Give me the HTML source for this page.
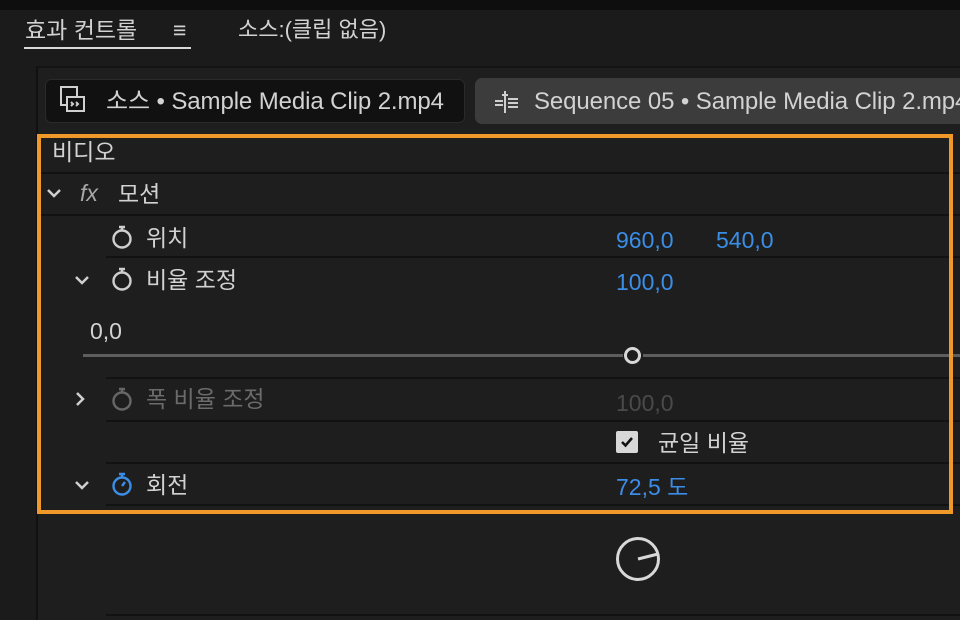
<!DOCTYPE html>
<html><head><meta charset="utf-8"><style>
*{margin:0;padding:0;box-sizing:border-box}
body{width:960px;height:620px;background:#1b1b1b;overflow:hidden;position:relative;font-family:"Liberation Sans","Noto Sans CJK KR",sans-serif;color:#d2d2d2}
.a{position:absolute;white-space:nowrap;line-height:1}
.ln{position:absolute;height:2px;background:#121212}
.k{font-size:23px}
.v{font-size:23px;color:#3b8de6}
</style></head><body>
<div class="a" style="left:0;top:0;width:960px;height:10px;background:#0e0e0e"></div>
<div class="a" style="left:36px;top:66px;width:924px;height:554px;background:#1e1e1e;border-left:2px solid #111;border-top:2px solid #141414"></div>
<div class="a" style="left:25px;top:19px;font-size:23px">효과 컨트롤</div>
<div class="a" style="left:173px;top:19px;font-size:23px">≡</div>
<div class="a" style="left:24px;top:47px;width:167px;height:2px;background:#d8d8d8"></div>
<div class="a" style="left:238px;top:19px;font-size:22px">소스:(클립 없음)</div>

<div class="a" style="left:45px;top:79px;width:420px;height:44px;background:#111;border:1px solid #2a2a2a;border-radius:6px"></div>
<svg class="a" style="left:58px;top:85px" width="32" height="32" viewBox="0 0 32 32" fill="none" stroke="#d0d0d0" stroke-width="2"><rect x="3" y="2" width="16" height="18"/><rect x="9" y="12" width="17" height="14" fill="#111"/><path d="M13 17l2 2-2 2M18 17l2 2-2 2"/></svg>
<div class="a" style="left:106px;top:90px;font-size:24px;letter-spacing:-0.1px">소스 • Sample Media Clip 2.mp4</div>
<div class="a" style="left:475px;top:78px;width:500px;height:46px;background:#3c3c3c;border-radius:7px"></div>
<svg class="a" style="left:491px;top:91px" width="30" height="22" viewBox="0 0 30 22" fill="none" stroke="#cfcfcf" stroke-width="2"><path d="M14 0v22M11 4h6M4 10h8M4 14h8M17 8h10M17 12h10M17 16h10"/></svg>
<div class="a" style="left:534px;top:90px;font-size:24px;letter-spacing:-0.1px">Sequence 05 • Sample Media Clip 2.mp4</div>

<div class="ln" style="left:40px;top:172px;width:920px"></div>
<div class="ln" style="left:40px;top:214px;width:920px"></div>
<div class="ln" style="left:106px;top:256px;width:854px"></div>
<div class="ln" style="left:106px;top:377px;width:854px"></div>
<div class="ln" style="left:106px;top:420px;width:854px"></div>
<div class="ln" style="left:106px;top:462px;width:854px"></div>
<div class="ln" style="left:106px;top:504px;width:854px"></div>
<div class="ln" style="left:106px;top:614px;width:854px"></div>

<div class="a k" style="left:52px;top:141px">비디오</div>
<svg class="a" style="left:46px;top:187px" width="16" height="12"><path d="M2 3l6 6 6-6" stroke="#cfcfcf" stroke-width="2.5" fill="none"/></svg>
<div class="a" style="left:80px;top:182px;font-size:23px;font-style:italic;color:#a8a8a8">fx</div>
<div class="a k" style="left:118px;top:183px">모션</div>

<svg class="a" style="left:110px;top:224px" width="24" height="26" viewBox="0 0 24 26" fill="none" stroke="#cfcfcf" stroke-width="2.4"><circle cx="12" cy="15" r="8.5"/><path d="M9 3h6M12 3v3"/></svg>
<div class="a k" style="left:146px;top:227px">위치</div>
<div class="a v" style="left:616px;top:229px">960,0</div>
<div class="a v" style="left:716px;top:229px">540,0</div>

<svg class="a" style="left:74px;top:274px" width="16" height="12"><path d="M2 3l6 6 6-6" stroke="#cfcfcf" stroke-width="2.5" fill="none"/></svg>
<svg class="a" style="left:110px;top:266px" width="24" height="26" viewBox="0 0 24 26" fill="none" stroke="#cfcfcf" stroke-width="2.4"><circle cx="12" cy="15" r="8.5"/><path d="M9 3h6M12 3v3"/></svg>
<div class="a k" style="left:146px;top:269px">비율 조정</div>
<div class="a v" style="left:616px;top:271px">100,0</div>

<div class="a" style="left:90px;top:320px;font-size:23px">0,0</div>
<div class="a" style="left:83px;top:354px;width:540px;height:3px;background:#5e5e5e"></div>
<div class="a" style="left:643px;top:354px;width:317px;height:3px;background:#5e5e5e"></div>
<div class="a" style="left:624px;top:347px;width:17px;height:17px;border-radius:50%;border:3.5px solid #d8d8d8"></div>

<svg class="a" style="left:74px;top:391px" width="12" height="16"><path d="M3 2l6 6-6 6" stroke="#cfcfcf" stroke-width="2.5" fill="none"/></svg>
<svg class="a" style="left:110px;top:386px" width="24" height="26" viewBox="0 0 24 26" fill="none" stroke="#666" stroke-width="2.4"><circle cx="12" cy="15" r="8.5"/><path d="M9 3h6M12 3v3"/></svg>
<div class="a k" style="left:146px;top:388px;color:#6b6b6b">폭 비율 조정</div>
<div class="a" style="left:616px;top:392px;font-size:23px;color:#4a4a4a">100,0</div>

<div class="a" style="left:616px;top:431px;width:22px;height:22px;background:#d8d8d8;border-radius:2px"></div>
<svg class="a" style="left:619px;top:434px" width="16" height="16"><path d="M3 8l3.5 3.5L13 4" stroke="#111" stroke-width="2.6" fill="none"/></svg>
<div class="a k" style="left:658px;top:432px">균일 비율</div>

<svg class="a" style="left:74px;top:479px" width="16" height="12"><path d="M2 3l6 6 6-6" stroke="#cfcfcf" stroke-width="2.5" fill="none"/></svg>
<svg class="a" style="left:110px;top:471px" width="24" height="26" viewBox="0 0 24 26" fill="none" stroke="#3b8de6" stroke-width="2.4"><circle cx="12" cy="15" r="8.5"/><path d="M9 3h6M12 3v3M12 15l3-4"/></svg>
<div class="a k" style="left:146px;top:474px">회전</div>
<div class="a v" style="left:616px;top:476px">72,5 도</div>

<svg class="a" style="left:614px;top:535px" width="48" height="48" viewBox="0 0 48 48" fill="none" stroke="#d8d8d8" stroke-width="3"><circle cx="24" cy="24" r="20.5"/><path d="M24 24l20-5"/></svg>

<div class="a" style="left:37px;top:134px;width:916px;height:380px;border:4px solid #f0982a"></div>
</body></html>
